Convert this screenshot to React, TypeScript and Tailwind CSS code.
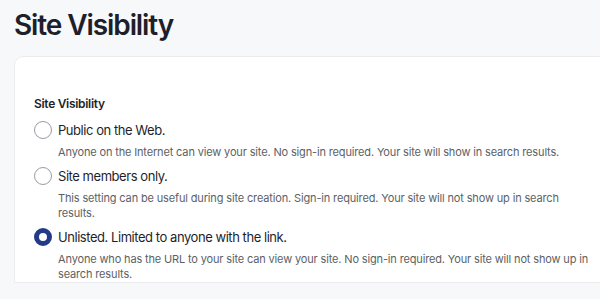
import { useState } from 'react';

const OPTIONS = [
  {
    id: 'public',
    title: 'Public on the Web.',
    description: [
      'Anyone on the Internet can view your site. No sign-in required. Your site will show in search results.',
    ],
  },
  {
    id: 'members',
    title: 'Site members only.',
    description: [
      'This setting can be useful during site creation. Sign-in required. Your site will not show up in search',
      'results.',
    ],
  },
  {
    id: 'unlisted',
    title: 'Unlisted. Limited to anyone with the link.',
    description: [
      'Anyone who has the URL to your site can view your site. No sign-in required. Your site will not show up in search results.',
    ],
  },
];

function Radio({ checked }: { checked: boolean }) {
  return (
    <span
      className={
        checked
          ? 'box-border h-[18px] w-[18px] shrink-0 rounded-full border-[5px] border-[#213b86] bg-white'
          : 'box-border h-[18px] w-[18px] shrink-0 rounded-full border-[1.5px] border-[#9a9ca3] bg-white'
      }
    />
  );
}

export default function App() {
  const [value, setValue] = useState('unlisted');

  return (
    <div className="h-screen overflow-hidden bg-[#f7f8fa] pl-[14px] pt-[8px] font-['Inter',sans-serif]">
      <h1 className="text-[28px] font-semibold leading-[34px] tracking-[-1.1px] text-[#1e1f2a]">
        Site Visibility
      </h1>

      <div className="mt-[14px] w-[640px] rounded-tl-[9px] border border-[#ececef] bg-white pl-[19px] pt-[39px]">
        <div className="text-[12px] font-semibold leading-[16px] tracking-[-0.3px] text-[#1e1f2a]">
          Site Visibility
        </div>

        <div className="mt-[8px] flex flex-col gap-[6px]">
          {OPTIONS.map((opt) => (
            <label key={opt.id} className="block cursor-pointer" onClick={() => setValue(opt.id)}>
              <div className="flex h-[20px] items-center gap-[6px]">
                <Radio checked={value === opt.id} />
                <span className="text-[13px] leading-[20px] tracking-[-0.45px] text-[#1e1f2a]">
                  {opt.title}
                </span>
              </div>
              {/* pl counts inside the width (border-box), text runs to ~x=596 */}
              <p className="mt-[5px] w-[562px] pl-[24px] text-[11px] leading-[15px] tracking-[-0.15px] text-[#5c5f66]">
                {opt.description.map((line, i) => (
                  <span key={i}>
                    {i > 0 && <br />}
                    {line}
                  </span>
                ))}
              </p>
            </label>
          ))}
        </div>
      </div>
    </div>
  );
}
